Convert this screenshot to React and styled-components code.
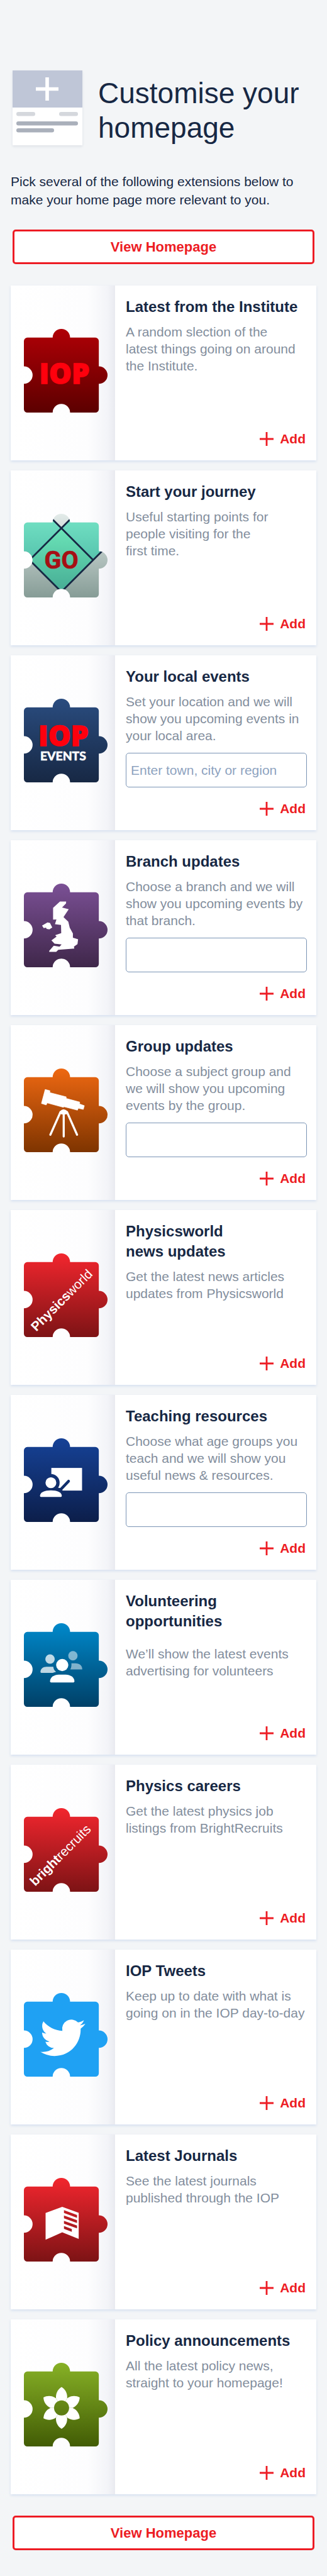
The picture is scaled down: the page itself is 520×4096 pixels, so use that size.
import React, { useId } from "react";
import styled, { createGlobalStyle } from "styled-components";

const GlobalStyle = createGlobalStyle`
  *, *::before, *::after { box-sizing: border-box; }
  body {
    margin: 0;
    background: #f3f5f7;
    color: #172844;
    font-family: "Liberation Sans", Arial, sans-serif;
  }
`;

const Page = styled.main`
  padding: 112px 17px 41px;
`;

const Header = styled.header`
  display: flex;
  align-items: flex-end;
  gap: 25px;
  padding: 0 3px;
`;

const HeaderIcon = styled.svg`
  flex: none;
  width: 111px;
  height: 119px;
  box-shadow: 0 2px 4px rgba(40, 60, 100, 0.1);
`;

const PageTitle = styled.h1`
  margin: 0;
  font-size: 46px;
  line-height: 55px;
  font-weight: 400;
`;

const Intro = styled.p`
  margin: 43px 0 33px;
  font-size: 21px;
  line-height: 29px;
  white-space: pre-line;
`;

const ButtonRow = styled.div`
  display: flex;
  padding: 0 3px;
`;

const HomepageLink = styled.a`
  flex: 1;
  display: flex;
  align-items: center;
  justify-content: center;
  height: 55px;
  border: 3px solid #ed1c24;
  border-radius: 5px;
  background: #fff;
  color: #ed1c24;
  font-size: 22px;
  font-weight: 700;
  text-decoration: none;
`;

const CardList = styled.ul`
  display: flex;
  flex-direction: column;
  gap: 16px;
  margin: 34px 0;
  padding: 0;
  list-style: none;
`;

const Card = styled.li`
  display: flex;
  min-height: 278px;
  background: #fff;
  box-shadow: 0 2px 4px rgba(120, 160, 220, 0.24);
`;

const PiecePane = styled.div`
  flex: none;
  width: 166px;
  padding: 69px 0 0 21px;
  background: linear-gradient(to right, #fff 0%, #fdfdfe 74%, #f3f4f8 93%, #e9eaf0 100%);
`;

const PieceSvg = styled.svg`
  display: block;
  width: 133px;
  height: 133px;
`;

const CardBody = styled.div`
  flex: 1;
  display: flex;
  flex-direction: column;
  padding: 18px 15px 22px 17px;
`;

const CardTitle = styled.h2`
  margin: 0;
  font-size: 24px;
  line-height: 32px;
  font-weight: 700;
  white-space: pre-line;
`;

const Description = styled.p`
  margin: ${(p) => (p.$spaced ? 22 : 10)}px 0 0;
  color: #838e9d;
  font-size: 21px;
  line-height: 27px;
  white-space: pre-line;
`;

const TextBox = styled.input`
  width: 100%;
  height: 55px;
  margin-top: 14px;
  padding: 0 7px;
  border: 1px solid #7a94b5;
  border-radius: 5px;
  background: #fff;
  color: #172844;
  font: inherit;
  font-size: 21px;

  &::placeholder {
    color: #8ea3bf;
    opacity: 1;
  }
`;

const AddButton = styled.button`
  display: flex;
  align-items: center;
  align-self: flex-end;
  gap: 10px;
  height: 24px;
  margin-top: auto;
  padding: 0 2px 0 0;
  border: 0;
  background: none;
  color: #ed1c24;
  font: inherit;
  font-size: 21px;
  font-weight: 700;
  cursor: pointer;
`;

const PIECE =
  "M8 20H66A20 20 0 0 1 106 20H164A8 8 0 0 1 172 28V86A20 20 0 0 1 172 126V184A8 8 0 0 1 164 192H106A20 20 0 0 0 66 192H8A8 8 0 0 1 0 184V126A20 20 0 0 0 0 86V28A8 8 0 0 1 8 20Z";

function Piece({ from, to, children }) {
  const id = useId();
  return (
    <PieceSvg viewBox="0 0 192 192" aria-hidden="true">
      <defs>
        <linearGradient id={id} x1="0" y1="0" x2="0" y2="1">
          <stop offset="0" stopColor={from} />
          <stop offset="1" stopColor={to} />
        </linearGradient>
      </defs>
      <path d={PIECE} fill={`url(#${id})`} />
      {children}
    </PieceSvg>
  );
}

const Wordmark = styled.text`
  font-family: "Open Sans", sans-serif;
  font-size: 65px;
  font-weight: 800;
  text-anchor: middle;
  fill: #ff000d;
  stroke: #ff000d;
  stroke-width: 2px;
`;

const IopPiece = () => (
  <Piece from="#b00006" to="#5c0000">
    <Wordmark x="93" y="126">IOP</Wordmark>
  </Piece>
);

const JourneyPiece = () => (
  <Piece from="#e3ebe9" to="#869c96">
    <defs>
      <clipPath id="journey-clip"><path d={PIECE} /></clipPath>
      <linearGradient id="journey-top" gradientUnits="userSpaceOnUse" x1="0" y1="0" x2="0" y2="110">
        <stop offset="0" stopColor="#75e4c6" />
        <stop offset="1" stopColor="#55c2ac" />
      </linearGradient>
      <linearGradient id="journey-mid" gradientUnits="userSpaceOnUse" x1="0" y1="33" x2="0" y2="179">
        <stop offset="0" stopColor="#6be4b8" />
        <stop offset="1" stopColor="#46ac94" />
      </linearGradient>
    </defs>
    <g clipPath="url(#journey-clip)">
      <path d="M86 33L13 106H-10V-63Z M86 33L159 106L200 65V-81Z" fill="url(#journey-top)" />
      <path d="M86 33L159 106L86 179L13 106Z" fill="url(#journey-mid)" />
      <path d="M116 3L13 106L96 189 M56 3L159 106 M76 189L190 75" fill="none" stroke="#172844" strokeWidth="4" />
    </g>
    <text x="86" y="126" textAnchor="middle" fontFamily="Roboto, sans-serif" fontWeight="700" fontSize="57" fill="#a60f14" stroke="#a60f14">GO</text>
  </Piece>
);

const EventsPiece = () => (
  <Piece from="#2a4c7f" to="#172844">
    <Wordmark x="91" y="108">IOP</Wordmark>
    <text x="90" y="142" textAnchor="middle" fontFamily="Lato, sans-serif" fontWeight="700" fontSize="28" fill="#fff" stroke="#fff">EVENTS</text>
  </Piece>
);

const BranchPiece = () => (
  <Piece from="#7b5095" to="#3f274a">
    <path
      fill="#fff"
      d="M82.8 41L97 41.3L96.7 45.3L87.6 55L102.9 59L90.9 76.7L101.9 87.3L105.3 101.3L112.5 114.3V124L124.4 127.7L123 139L114.8 144.7L115.8 149L79 152L74.2 156.7H58L58.4 154L68.4 142.7L81.8 144.7L86.6 139.7L70.4 138L63.2 130.3L75.1 121.7L71.8 118.3L85.7 113.7L85.2 95L71.3 93L74.7 82.3L67 82.7V55.7Z M41.7 96.3L54.1 89L59.8 90.3L65.1 100.7L58.4 105L52.2 104L50.7 101L45.5 102.3Z"
    />
  </Piece>
);

const GroupPiece = () => (
  <Piece from="#ee6812" to="#7e3400">
    <path
      fill="#fff"
      stroke="#fff"
      strokeLinejoin="round"
      d="M48.8 48L59.8 51L59.4 55.3L97.1 65V68.7L128.2 77L127.8 81.3L138.8 85.3L136.4 94L124.9 91.3L123 95.7L91.9 87.7L90.9 89.3L53.6 79L51.2 83.7L40.2 80.3Z"
    />
    <path d="M81.5 101C83 97 87 93.7 91.4 93.7C96 93.7 99.5 97 101 101L98 104.5L95.5 105.5H87.5L85 104.5Z" fill="#fff" />
    <path d="M84 100L60.8 152 M91.4 100V156 M99 100L122 152" fill="none" stroke="#fff" strokeWidth="4.8" strokeLinecap="round" />
  </Piece>
);

const PhysicsworldPiece = () => (
  <Piece from="#f2262e" to="#7d1315">
    <text transform="translate(28.5 180) rotate(-45)" fontSize="30" fill="#fff">
      <tspan fontWeight="700">Physics</tspan>
      <tspan>world</tspan>
    </text>
  </Piece>
);

const TeachingPiece = () => (
  <Piece from="#164297" to="#0c1e4a">
    <defs>
      <mask id="board-mask">
        <rect width="192" height="192" fill="#fff" />
        <circle cx="62" cy="102" r="20" />
        <path d="M60 113L77 113L84 114.5L90 121H60Z" />
        <path d="M84 118L102.5 98.5" stroke="#000" strokeWidth="6.5" strokeLinecap="round" />
      </mask>
    </defs>
    <rect x="63" y="68" width="70.5" height="52" fill="#fff" mask="url(#board-mask)" />
    <circle cx="62" cy="102" r="12.4" fill="#fff" />
    <path d="M37 132C37 124 48 119.5 62 119.5S87 124 87 132Q87 134.5 85 134.5H39Q37 134.5 37 132Z" fill="#fff" />
  </Piece>
);

const VolunteerPiece = () => (
  <Piece from="#0089cb" to="#004067">
    <g fill="#fff">
      <g opacity="0.75">
        <circle cx="60" cy="82.3" r="10.8" />
        <path d="M38 112C38 105 44 100 52 100H67.5C68 105 70 109 74 111.5L66 114H40Q38 114 38 112Z" />
      </g>
      <g opacity="0.5">
        <circle cx="112.5" cy="74.7" r="10.7" />
        <path d="M109 92H118C128 92 134 97 134 106H106.5C109 102 109.5 97 109 92Z" />
      </g>
      <circle cx="88" cy="96" r="14" />
      <path d="M60 133C60 124 70 118 80 118H96C106 118 116 124 116 133Q116 136 113.5 136H62.5Q60 136 60 133Z" />
    </g>
  </Piece>
);

const CareersPiece = () => (
  <Piece from="#f2262e" to="#7d1315">
    <text transform="translate(26 180) rotate(-45)" fontSize="30" fill="#fff">
      <tspan fontWeight="700">bright</tspan>
      <tspan>recruits</tspan>
    </text>
  </Piece>
);

const TweetsPiece = () => (
  <Piece from="#1fa1f3" to="#1fa1f3">
    <path
      transform="translate(37.8 51.3) scale(4.29)"
      fill="#fff"
      d="M23.953 4.57a10 10 0 01-2.825.775 4.958 4.958 0 002.163-2.723c-.951.555-2.005.959-3.127 1.184a4.92 4.92 0 00-8.384 4.482C7.69 8.095 4.067 6.13 1.64 3.162a4.822 4.822 0 00-.666 2.475c0 1.71.87 3.213 2.188 4.096a4.904 4.904 0 01-2.228-.616v.06a4.923 4.923 0 003.946 4.827 4.996 4.996 0 01-2.212.085 4.936 4.936 0 004.604 3.417 9.867 9.867 0 01-6.102 2.105c-.39 0-.779-.023-1.17-.067a13.995 13.995 0 007.557 2.209c9.053 0 13.998-7.496 13.998-13.985 0-.21 0-.42-.015-.63A9.935 9.935 0 0024 4.59z"
    />
  </Piece>
);

const JournalsPiece = () => (
  <Piece from="#f2262e" to="#7d1315">
    <path
      fill="#fff"
      fillRule="evenodd"
      d="M49.8 80.6L88 66.3L125.8 80V140L88 125L49.8 142Z M92 74L122 85V91.5L92 80.5Z M92 86.2L122 97.2V103.7L92 92.7Z M92 98.4L122 109.4V115.9L92 104.9Z M92 110.6L110 117.2V123.7L92 117.1Z"
    />
  </Piece>
);

const PolicyPiece = () => (
  <Piece from="#87b126" to="#425c05">
    <defs>
      <mask id="flower-mask">
        <rect width="192" height="192" fill="#fff" />
        <circle cx="86.5" cy="103.5" r="17.3" />
      </mask>
    </defs>
    <g mask="url(#flower-mask)" fill="#fff">
      {[0, 60, 120, 180, 240, 300].map((angle) => (
        <path
          key={angle}
          transform={`translate(86.5 103.5) rotate(${angle})`}
          d="M-12.7 -22C-14 -34 -8 -43 0 -48C8 -43 14 -34 12.7 -22L0 0Z"
        />
      ))}
    </g>
  </Piece>
);

const EXTENSIONS = [
  { Art: IopPiece, title: "Latest from the Institute", text: "A random slection of the\nlatest things going on around\nthe Institute." },
  { Art: JourneyPiece, title: "Start your journey", text: "Useful starting points for\npeople visiting for the\nfirst time." },
  {
    Art: EventsPiece,
    title: "Your local events",
    text: "Set your location and we will\nshow you upcoming events in\nyour local area.",
    field: "Location",
    placeholder: "Enter town, city or region",
  },
  { Art: BranchPiece, title: "Branch updates", text: "Choose a branch and we will\nshow you upcoming events by\nthat branch.", field: "Branch" },
  { Art: GroupPiece, title: "Group updates", text: "Choose a subject group and\nwe will show you upcoming\nevents by the group.", field: "Subject group" },
  { Art: PhysicsworldPiece, title: "Physicsworld\nnews updates", text: "Get the latest news articles\nupdates from Physicsworld" },
  { Art: TeachingPiece, title: "Teaching resources", text: "Choose what age groups you\nteach and we will show you\nuseful news & resources.", field: "Age groups" },
  { Art: VolunteerPiece, title: "Volunteering\nopportunities", text: "We’ll show the latest events\nadvertising for volunteers", spaced: true },
  { Art: CareersPiece, title: "Physics careers", text: "Get the latest physics job\nlistings from BrightRecruits" },
  { Art: TweetsPiece, title: "IOP Tweets", text: "Keep up to date with what is\ngoing on in the IOP day-to-day" },
  { Art: JournalsPiece, title: "Latest Journals", text: "See the latest journals\npublished through the IOP" },
  { Art: PolicyPiece, title: "Policy announcements", text: "All the latest policy news,\nstraight to your homepage!" },
];

function ExtensionCard({ Art, title, text, field, placeholder, spaced }) {
  return (
    <Card>
      <PiecePane>
        <Art />
      </PiecePane>
      <CardBody>
        <CardTitle>{title}</CardTitle>
        <Description $spaced={spaced}>{text}</Description>
        {field && <TextBox type="text" aria-label={field} placeholder={placeholder} />}
        <AddButton type="button">
          <svg width="22" height="22" viewBox="0 0 22 22" aria-hidden="true">
            <path d="M11 0V22M0 11H22" stroke="currentColor" strokeWidth="2.8" />
          </svg>
          Add
        </AddButton>
      </CardBody>
    </Card>
  );
}

function ViewHomepage() {
  return (
    <ButtonRow>
      <HomepageLink href="#homepage">View Homepage</HomepageLink>
    </ButtonRow>
  );
}

export default function App() {
  return (
    <>
      <GlobalStyle />
      <Page>
        <Header>
          <HeaderIcon viewBox="0 0 111 119" aria-hidden="true">
            <rect width="111" height="119" fill="#fff" />
            <rect width="111" height="59" fill="#bfc6d7" />
            <path d="M55 11V48M37 29.5H73" stroke="#fff" strokeWidth="5.6" />
            <rect x="6" y="66" width="30" height="6.5" rx="3.2" fill="#d5d8dd" />
            <rect x="74" y="66" width="30" height="6.5" rx="3.2" fill="#d5d8dd" />
            <rect x="6" y="81" width="98" height="6.5" rx="3.2" fill="#aab0bb" />
            <rect x="6" y="92" width="60" height="6.5" rx="3.2" fill="#aab0bb" />
          </HeaderIcon>
          <PageTitle>Customise your homepage</PageTitle>
        </Header>
        <Intro>{"Pick several of the following extensions below to\nmake your home page more relevant to you."}</Intro>
        <ViewHomepage />
        <CardList>
          {EXTENSIONS.map((ext) => (
            <ExtensionCard key={ext.title} {...ext} />
          ))}
        </CardList>
        <ViewHomepage />
      </Page>
    </>
  );
}
